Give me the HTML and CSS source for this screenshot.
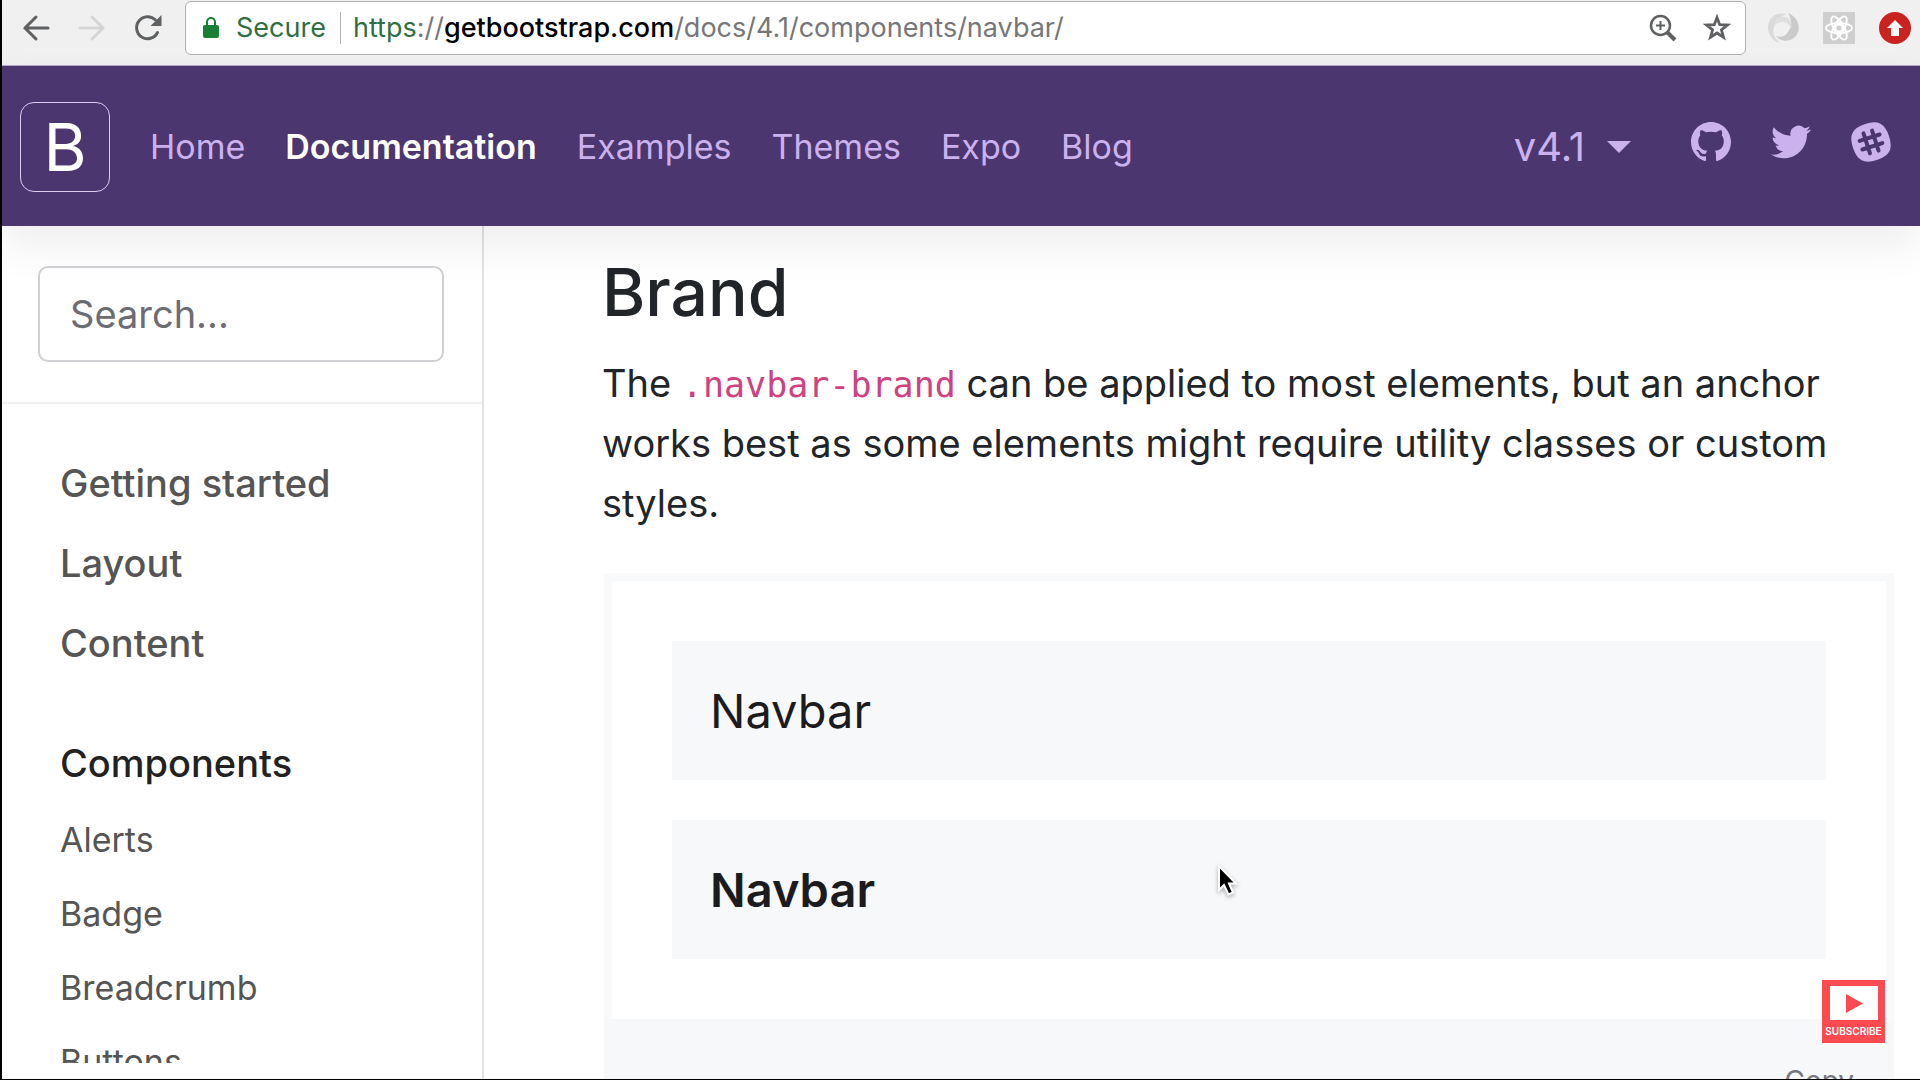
FILE: index.html
```html
<!DOCTYPE html>
<html lang="en">
<head>
<meta charset="utf-8">
<title>Navbar · Bootstrap</title>
<link rel="stylesheet" href="styles.css">
</head>
<body>
<div class="window">
  <div class="toolbar">
    <div class="tools">
      <button class="tool" aria-label="Back"><svg width="28" height="28" viewBox="0 0 28 28" fill="none" stroke="#5f6062" stroke-width="3" stroke-linecap="round"><path d="M26 14H3M14 3 3 14l11 11"/></svg></button>
      <button class="tool" aria-label="Forward" disabled><svg width="28" height="28" viewBox="0 0 28 28" fill="none" stroke="#d5d5d5" stroke-width="3" stroke-linecap="round"><path d="M2 14h23M14 3l11 11-11 11"/></svg></button>
      <button class="tool" aria-label="Reload"><svg width="28" height="28" viewBox="0 0 28 28"><path d="M23.500 18.500A11 11 0 1 1 21.500 6" fill="none" stroke="#5f6062" stroke-width="3" stroke-linecap="round"/><path d="M27.500 1v11H16.500z" fill="#5f6062"/></svg></button>
    </div>
    <div class="omnibox">
      <svg width="18" height="24" viewBox="0 0 18 24"><rect x="1" y="9" width="16" height="13" rx="2" fill="#1a7f37"/><path d="M5 10V6a4 4 0 0 1 8 0v4" fill="none" stroke="#1a7f37" stroke-width="2"/></svg>
      <span class="secure">Secure</span>
      <span class="url"><span class="scheme">https</span>://<span class="host">getbootstrap.com</span>/docs/4.1/components/navbar/</span>
      <button class="tool" aria-label="Zoom"><svg width="28" height="28" viewBox="0 0 28 28" fill="none" stroke="#5f6062"><circle cx="11.500" cy="11.500" r="9.500" stroke-width="2.500"/><path d="M11.500 7v9M7 11.500h9" stroke-width="2"/><path d="M18.500 18.500 26 26" stroke-width="4"/></svg></button>
      <button class="tool" aria-label="Bookmark"><svg width="28" height="28" viewBox="0 0 28 28"><path d="m14 3.500 2.700 7.200 7.700.3-6 4.800 2.100 7.400-6.500-4.200-6.500 4.200 2.100-7.400-6-4.800 7.700-.3z" fill="none" stroke="#5f6062" stroke-width="2.800"/></svg></button>
    </div>
    <div class="extensions">
      <svg width="32" height="32" viewBox="0 0 32 32"><path d="M19 2C8-1 0 8 1 17c1 8 7 13 12 14-6-5-8-10-6-16 1-6 6-10 12-13z" fill="#dadada"/><path d="M21 1c13 5 14 21 4 26-6 3-12 2-16-3 5 2 10 0 12-4 4-6 4-12 0-19z" fill="#cacaca"/><path d="M6 15c0-6 6-11 11-10 5 0 9 5 7 12-1-4-4-7-8-7-5 0-8 2-10 5z" fill="#dfdfdf"/></svg>
      <svg width="32" height="32" viewBox="0 0 32 32"><rect width="32" height="32" rx="1" fill="#cfcfcf"/><g fill="none" stroke="#fff" stroke-width="1.800"><ellipse cx="16" cy="16" rx="13" ry="5"/><ellipse cx="16" cy="16" rx="13" ry="5" transform="rotate(60 16 16)"/><ellipse cx="16" cy="16" rx="13" ry="5" transform="rotate(120 16 16)"/><circle cx="16" cy="16" r="3.500"/></g></svg>
      <svg width="32" height="32" viewBox="0 0 32 32"><circle cx="16" cy="16" r="16" fill="#c9221f"/><path d="m16 8 8 8h-4v8h-8v-8H8z" fill="#fff"/></svg>
    </div>
  </div>

  <header class="navbar">
    <a class="logo" href="#" aria-label="Bootstrap">B</a>
    <nav class="links">
      <a href="#">Home</a>
      <a class="active" href="#">Documentation</a>
      <a href="#">Examples</a>
      <a href="#">Themes</a>
      <a href="#">Expo</a>
      <a href="#">Blog</a>
    </nav>
    <button class="version">v4.1<svg width="24" height="12" viewBox="0 0 24 12"><path d="M0 0h24L12 12z" fill="#cbb2ee"/></svg></button>
    <div class="social">
      <a href="#" aria-label="GitHub"><svg width="40" height="40" viewBox="0 0 16 16"><path fill="#cbb2ee" d="M8 0C3.580 0 0 3.580 0 8c0 3.540 2.290 6.530 5.470 7.590.4.070.55-.17.55-.38 0-.19-.01-.82-.01-1.490-2.010.37-2.530-.49-2.690-.94-.09-.23-.48-.94-.82-1.130-.28-.15-.68-.52-.01-.53.63-.01 1.080.58 1.230.82.72 1.210 1.870.87 2.330.66.07-.52.28-.87.51-1.070-1.780-.2-3.640-.89-3.640-3.950 0-.87.31-1.590.82-2.150-.08-.2-.36-1.020.08-2.120 0 0 .67-.21 2.200.82.64-.18 1.320-.27 2-.27s1.360.09 2 .27c1.530-1.040 2.200-.82 2.200-.82.44 1.100.16 1.920.08 2.120.51.56.82 1.270.82 2.150 0 3.070-1.870 3.750-3.650 3.950.29.25.54.73.54 1.480 0 1.070-.01 1.930-.01 2.200 0 .21.15.46.55.38A8.010 8.010 0 0 0 16 8c0-4.420-3.580-8-8-8z"/></svg></a>
      <a href="#" aria-label="Twitter"><svg width="40" height="40" viewBox="0 0 24 24"><path fill="#cbb2ee" d="M23.954 4.569a10 10 0 0 1-2.825.775 4.958 4.958 0 0 0 2.163-2.723c-.951.555-2.005.959-3.127 1.184a4.920 4.920 0 0 0-8.384 4.482C7.691 8.094 4.066 6.130 1.640 3.161a4.822 4.822 0 0 0-.666 2.475c0 1.710.87 3.213 2.188 4.096a4.904 4.904 0 0 1-2.228-.616v.061a4.923 4.923 0 0 0 3.946 4.827 4.996 4.996 0 0 1-2.212.085 4.937 4.937 0 0 0 4.604 3.417 9.868 9.868 0 0 1-6.102 2.105c-.39 0-.779-.023-1.170-.067a13.995 13.995 0 0 0 7.557 2.209c9.054 0 13.999-7.496 13.999-13.986 0-.209 0-.42-.015-.63a9.936 9.936 0 0 0 2.460-2.548z"/></svg></a>
      <a href="#" aria-label="Slack"><svg width="40" height="40" viewBox="0 0 40 40"><g transform="rotate(-18 20 20)"><path d="M20 2C33 2 38 7 38 20S33 38 20 38 2 33 2 20 7 2 20 2z" fill="#cbb2ee" stroke="#cbb2ee" stroke-width="2"/><path d="M15.500 9.500v21M24.500 9.500v21M9.500 15.500h21M9.500 24.500h21" stroke="#4b366f" stroke-width="4" stroke-linecap="round"/></g></svg></a>
    </div>
  </header>

  <div class="page">
    <aside class="sidebar">
      <form class="search"><input type="search" placeholder="Search..." aria-label="Search"></form>
      <nav class="toc">
        <a class="section" href="#">Getting started</a>
        <a class="section" href="#">Layout</a>
        <a class="section" href="#">Content</a>
        <div class="group">
          <a class="section current" href="#">Components</a>
          <a href="#">Alerts</a>
          <a href="#">Badge</a>
          <a href="#">Breadcrumb</a>
          <a href="#">Buttons</a>
        </div>
      </nav>
    </aside>
    <main class="content">
      <h3>Brand</h3>
      <p>The <code>.navbar-brand</code> can be applied to most elements, but an anchor works best as some elements might require utility classes or custom styles.</p>
      <div class="example">
        <div class="bar"><a href="#">Navbar</a></div>
        <div class="bar"><span class="strong">Navbar</span></div>
      </div>
      <div class="highlight"><button class="copy">Copy</button></div>
    </main>
  </div>

  <a class="subscribe" href="#">
    <svg width="48" height="34" viewBox="0 0 48 34"><rect width="48" height="34" fill="#fff"/><path d="M16 8v19l17-9.500z" fill="#fb4b50"/></svg>
    <span>SUBSCRIBE</span>
  </a>
  <svg class="pointer" width="26" height="36" viewBox="0 0 26 36"><path d="M4 2v24l5-5 4.500 9.500 4.500-2L14 19.500h7z" fill="#000" stroke="#fff" stroke-width="2"/></svg>
</div>
</body>
</html>
```
FILE: styles.css
```css
* { box-sizing: border-box; }

body {
  margin: 0;
  font-family: Inter, "Liberation Sans", sans-serif;
  color: #212529;
}

a { color: inherit; text-decoration: none; }

button {
  padding: 0;
  border: 0;
  background: none;
  font: inherit;
  color: inherit;
}

svg { display: block; flex: none; }

.window {
  position: relative;
  display: flex;
  flex-direction: column;
  height: 100vh;
  overflow: hidden;
  border-left: 2px solid #000;
  border-bottom: 1px solid #000;
  background: #fff;
}

/* Browser toolbar */
.toolbar {
  display: flex;
  flex: none;
  align-items: flex-start;
  height: 66px;
  padding: 1px 9px 0 20px;
  background: #f0f0f0;
  border-bottom: 1px solid #b5a8c4;
}

.tools, .extensions {
  display: flex;
  align-items: center;
  height: 54px;
}

.tools { gap: 28px; margin-right: 23px; }
.extensions { gap: 24px; margin-left: 21px; }

.omnibox {
  display: flex;
  flex: 1;
  align-items: center;
  height: 54px;
  padding: 0 14px 0 16px;
  border: 1px solid #b0b0b0;
  border-radius: 6px;
  background: #fff;
  font-size: 27px;
  line-height: 32px;
}

.omnibox .tool { margin-left: 26px; }

.secure {
  margin-left: 16px;
  padding-right: 14px;
  border-right: 1px solid #b4b4b4;
  color: #2f6f43;
}

.url { flex: 1; margin-left: 12px; color: #77767a; }
.scheme { color: #2f6f43; }
.host { color: #000; font-weight: 500; }

/* Site header */
.navbar {
  position: relative;
  z-index: 1;
  display: flex;
  flex: none;
  align-items: center;
  height: 160px;
  padding: 2px 29px 0 18px;
  background: #4b366f;
  box-shadow: 0 20px 40px rgba(0, 0, 0, .07);
  color: #cbb2ee;
}

.logo {
  display: grid;
  place-items: center;
  width: 90px;
  height: 90px;
  margin-right: 20px;
  border: 1px solid #dccdf3;
  border-radius: 14px;
  color: #fff;
  font-size: 66px;
  line-height: 80px;
}

.links {
  display: flex;
  flex: 1;
  font-size: 34px;
  line-height: 52px;
}

.links a { padding: 0 20px; }
.links .active { color: #fff; font-weight: 600; }

.version {
  display: flex;
  align-items: center;
  gap: 22px;
  margin-right: 60px;
  font-size: 40px;
  line-height: 60px;
}

.social { display: flex; gap: 40px; padding-bottom: 10px; }

/* Page body */
.page { display: flex; flex: 1; min-height: 0; }

.sidebar {
  display: flex;
  flex: none;
  flex-direction: column;
  width: 482px;
  padding-bottom: 16px;
  border-right: 2px solid #e2e2e2;
}

.search {
  padding: 40px 38px 40px 36px;
  border-bottom: 2px solid #f2f2f2;
}

.search input {
  display: block;
  width: 100%;
  height: 96px;
  padding: 0 30px;
  border: 2px solid #ced0d3;
  border-radius: 10px;
  background: #fff;
  font: 38px/60px Inter, "Liberation Sans", sans-serif;
  appearance: none;
}

.search input::placeholder { color: #6c6c74; opacity: 1; }

.toc {
  flex: 1;
  min-height: 0;
  padding-top: 39px;
  overflow: hidden;
}

.toc a {
  display: block;
  padding: 10px 58px;
  color: #555;
  font-size: 34px;
  line-height: 54px;
}

.toc .section { font-size: 38px; line-height: 60px; font-weight: 500; }
.toc .current { color: #222; }
.group { margin-top: 40px; }

.content {
  flex: 1;
  min-width: 0;
  padding: 24px 26px 0 118px;
}

h3 {
  margin: 0 0 19px;
  font-size: 66px;
  line-height: 84px;
  font-weight: 500;
}

p {
  margin: 0 40px 40px 0;
  font-size: 38px;
  line-height: 60px;
}

code {
  color: #d0427f;
  font-family: "DejaVu Sans Mono", monospace;
  font-size: 35px;
  line-height: 54px;
}

.example, .highlight { margin-left: 2px; }

.example {
  display: flex;
  flex-direction: column;
  gap: 40px;
  padding: 60px;
  border: 8px solid #f8f9fa;
  border-bottom: 0;
}

.bar {
  padding: 20px 38px;
  background: #f7f8fa;
  font-size: 47px;
  line-height: 99px;
}

.bar a, .bar span { display: block; color: #1c1c1e; }
.bar .strong { font-weight: 600; }

.highlight {
  display: flex;
  justify-content: flex-end;
  min-height: 100px;
  padding: 42px 40px;
  background: #f7f8fa;
}

.copy { color: #77777d; font-size: 28px; line-height: 40px; }

/* Overlays on the page */
.subscribe {
  position: absolute;
  right: 35px;
  bottom: 36px;
  z-index: 2;
  display: flex;
  flex-direction: column;
  align-items: center;
  width: 63px;
  height: 63px;
  padding-top: 6px;
  background: #fb4b50;
  color: #fff;
  font-size: 10px;
  line-height: 22px;
  font-weight: 600;
}

.pointer {
  position: absolute;
  left: 1213px;
  top: 864px;
  z-index: 2;
  filter: drop-shadow(0 2px 2px rgba(0, 0, 0, .3));
}
```
